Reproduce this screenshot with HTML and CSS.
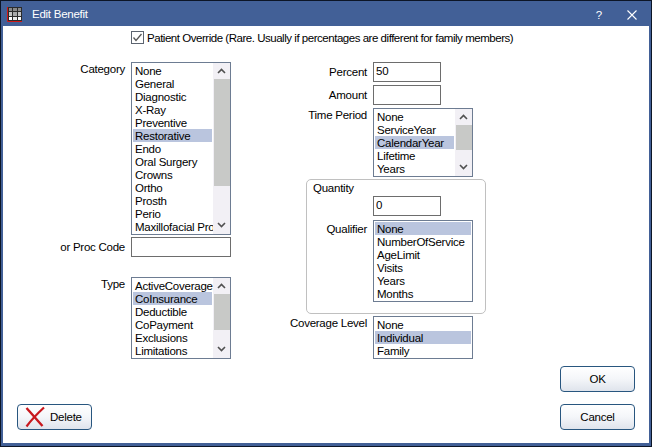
FILE: index.html
```html
<!DOCTYPE html>
<html>
<head>
    <title>Edit Benefit</title>
    <link rel="stylesheet" href="styles.css">
</head>
<body>
    <div class="window">
        <div class="titlebar">
            <svg class="app-icon" width="16" height="16" viewBox="0 0 16 16">
                <rect x="1" y="1" width="14" height="14" fill="#2b2b2b"/>
                <rect x="2" y="2" width="3" height="3" fill="#8a8a8a"/>
                <rect x="6" y="2" width="4" height="3" fill="#8a8a8a"/>
                <rect x="11" y="2" width="3" height="3" fill="#8a8a8a"/>
                <rect x="2" y="6" width="3" height="4" fill="#c4c4c4"/>
                <rect x="6" y="6" width="4" height="4" fill="#a8a8a8"/>
                <rect x="11" y="6" width="3" height="4" fill="#c4c4c4"/>
                <rect x="2" y="11" width="3" height="3" fill="#fff"/>
                <rect x="6" y="11" width="4" height="3" fill="#e8e8e8"/>
                <rect x="11" y="11" width="3" height="3" fill="#fff"/>
                <path d="M0.5 1V15.5H15" fill="none" stroke="#d01818"/>
            </svg>
            <span class="title">Edit Benefit</span>
            <span class="help">?</span>
            <svg class="close" width="10" height="10" viewBox="0 0 10 10">
                <path d="M0.5 0.5L9.5 9.5M9.5 0.5L0.5 9.5" stroke="#fff" stroke-width="1.1"/>
            </svg>
        </div>
        <div class="content">
            <label class="override">
                <svg class="check" width="13" height="13" viewBox="0 0 13 13">
                    <rect x="0.5" y="0.5" width="12" height="12" fill="#fff" stroke="#5c6470"/>
                    <path d="M2.5 6.5L5 9.5L10.5 3" fill="none" stroke="#555" stroke-width="1.3"/>
                </svg>
                <span class="override-text">Patient Override (Rare. Usually if percentages are different for family members)</span>
            </label>

            <div class="columns">
                <div class="col-left">
                    <div class="row">
                        <div class="lbl">Category</div>
                        <div class="list list-wide list-category">
                            <div class="items">
                                <div>None</div>
                                <div>General</div>
                                <div>Diagnostic</div>
                                <div>X-Ray</div>
                                <div>Preventive</div>
                                <div class="sel">Restorative</div>
                                <div>Endo</div>
                                <div>Oral Surgery</div>
                                <div>Crowns</div>
                                <div>Ortho</div>
                                <div>Prosth</div>
                                <div>Perio</div>
                                <div>Maxillofacial Prosth</div>
                            </div>
                            <div class="scroll">
                                <svg class="arrow" viewBox="0 0 9 6"><path d="M1 5L4.5 1.5L8 5" fill="none" stroke="#505050" stroke-width="1.6"/></svg>
                                <div class="track"><div class="thumb thumb-category"></div></div>
                                <svg class="arrow" viewBox="0 0 9 6"><path d="M1 1L4.5 4.5L8 1" fill="none" stroke="#505050" stroke-width="1.6"/></svg>
                            </div>
                        </div>
                    </div>
                    <div class="row row-code">
                        <div class="lbl lbl-mid">or Proc Code</div>
                        <input class="text text-wide" type="text">
                    </div>
                    <div class="row row-type">
                        <div class="lbl">Type</div>
                        <div class="list list-wide list-type">
                            <div class="items">
                                <div>ActiveCoverage</div>
                                <div class="sel">CoInsurance</div>
                                <div>Deductible</div>
                                <div>CoPayment</div>
                                <div>Exclusions</div>
                                <div>Limitations</div>
                            </div>
                            <div class="scroll">
                                <svg class="arrow" viewBox="0 0 9 6"><path d="M1 5L4.5 1.5L8 5" fill="none" stroke="#505050" stroke-width="1.6"/></svg>
                                <div class="track"><div class="thumb thumb-type"></div></div>
                                <svg class="arrow" viewBox="0 0 9 6"><path d="M1 1L4.5 4.5L8 1" fill="none" stroke="#505050" stroke-width="1.6"/></svg>
                            </div>
                        </div>
                    </div>
                </div>

                <div class="col-right">
                    <div class="row">
                        <div class="lbl lbl-mid">Percent</div>
                        <input class="text" type="text" value="50">
                    </div>
                    <div class="row row-amount">
                        <div class="lbl lbl-mid">Amount</div>
                        <input class="text" type="text">
                    </div>
                    <div class="row row-time">
                        <div class="lbl">Time Period</div>
                        <div class="list list-wide list-time">
                            <div class="items">
                                <div>None</div>
                                <div>ServiceYear</div>
                                <div class="sel">CalendarYear</div>
                                <div>Lifetime</div>
                                <div>Years</div>
                            </div>
                            <div class="scroll">
                                <svg class="arrow" viewBox="0 0 9 6"><path d="M1 5L4.5 1.5L8 5" fill="none" stroke="#505050" stroke-width="1.6"/></svg>
                                <div class="track"><div class="thumb thumb-time"></div></div>
                                <svg class="arrow" viewBox="0 0 9 6"><path d="M1 1L4.5 4.5L8 1" fill="none" stroke="#505050" stroke-width="1.6"/></svg>
                            </div>
                        </div>
                    </div>
                    <div class="group">
                        <div class="group-title">Quantity</div>
                        <div class="row row-qty">
                            <div class="lbl"></div>
                            <input class="text" type="text" value="0">
                        </div>
                        <div class="row row-qualifier">
                            <div class="lbl lbl-qualifier">Qualifier</div>
                            <div class="list list-wide list-qualifier">
                                <div class="items">
                                    <div class="sel">None</div>
                                    <div>NumberOfService</div>
                                    <div>AgeLimit</div>
                                    <div>Visits</div>
                                    <div>Years</div>
                                    <div>Months</div>
                                </div>
                            </div>
                        </div>
                    </div>
                    <div class="row row-level">
                        <div class="lbl">Coverage Level</div>
                        <div class="list list-wide list-level">
                            <div class="items">
                                <div>None</div>
                                <div class="sel">Individual</div>
                                <div>Family</div>
                            </div>
                        </div>
                    </div>
                </div>
            </div>

            <div class="footer">
                <button class="btn btn-delete" type="button">
                    <svg width="22" height="22" viewBox="0 0 22 22">
                        <path d="M2.5 2C8 8 13 14 18.5 20" fill="none" stroke="#c8181e" stroke-width="2.4"/>
                        <path d="M20 1.5C14 7 8 13 2.5 20.5" fill="none" stroke="#c8181e" stroke-width="2.2"/>
                    </svg>
                    <span>Delete</span>
                </button>
                <div class="footer-right">
                    <button class="btn" type="button">OK</button>
                    <button class="btn" type="button">Cancel</button>
                </div>
            </div>
        </div>
    </div>
</body>
</html>
```

FILE: styles.css
```css
html, body {
    margin: 0;
    padding: 0;
    width: 652px;
    height: 447px;
    overflow: hidden;
    background-color: #000;
}
body {
    font-family: "Liberation Sans", Arial, sans-serif;
    font-size: 11.5px;
    letter-spacing: -0.25px;
    color: #000;
}
.window {
    box-sizing: border-box;
    width: 652px;
    height: 447px;
    display: flex;
    flex-direction: column;
    background-color: #426097;
    border: 1px solid #0c1526;
}
.titlebar {
    height: 25px;
    display: flex;
    align-items: center;
    color: #fff;
    flex: none;
}
.app-icon {
    margin-left: 6px;
}
.title {
    margin-left: 9px;
    flex: 1;
}
.help {
    margin-right: 25px;
    padding-top: 2px;
}
.close {
    margin-right: 14px;
    margin-top: 3px;
}
.content {
    flex: 1;
    margin: 0 2px 3px 2px;
    background-color: #fff;
    display: flex;
    flex-direction: column;
    min-height: 0;
}
.override {
    display: flex;
    align-items: center;
    gap: 3px;
    margin: 5px 0 0 128px;
    height: 13px;
}
.override-text {
    letter-spacing: -0.47px;
}
.check {
    flex: none;
}
.columns {
    display: flex;
    margin-top: 18px;
}
.col-left {
    width: 300px;
    display: flex;
    flex-direction: column;
    flex: none;
}
.col-right {
    display: flex;
    flex-direction: column;
}
.row {
    display: flex;
    gap: 6px;
}
.lbl {
    display: flex;
    justify-content: flex-end;
    flex: none;
    line-height: 14px;
    white-space: nowrap;
}
.col-left .lbl {
    width: 122px;
}
.col-right .lbl {
    width: 64px;
}
.lbl-mid {
    align-self: center;
}
.row-code {
    margin-top: 2px;
}
.row-type {
    margin-top: 20px;
}
.row-amount {
    margin-top: 3px;
}
.row-time {
    margin-top: 3px;
}
.row-qualifier {
    margin-top: 4px;
}
.row-level {
    margin-top: 2px;
}
.text {
    box-sizing: border-box;
    width: 68px;
    height: 20px;
    border: 1px solid #6d6d6d;
    padding: 0 2px 3px;
    margin: 0;
    font: inherit;
    letter-spacing: inherit;
    color: #000;
    background-color: #fff;
    outline: none;
}
.text-wide {
    width: 100px;
}
.list {
    box-sizing: border-box;
    display: flex;
    border: 1px solid #6d7c92;
    background-color: #fff;
    overflow: hidden;
    flex: none;
}
.list-wide {
    width: 100px;
}
.list-category {
    height: 173px;
}
.list-type {
    height: 82px;
}
.list-time {
    height: 69px;
}
.list-qualifier {
    height: 82px;
}
.list-level {
    height: 43px;
}
.items {
    flex: 1;
    min-width: 0;
    padding: 1px 1px 0;
    white-space: nowrap;
    overflow: hidden;
}
.items div {
    height: 13px;
    line-height: 15px;
    padding-left: 2px;
}
.items .sel {
    background-color: #bac5de;
}
.scroll {
    width: 17px;
    flex: none;
    display: flex;
    flex-direction: column;
    background-color: #f2f0f5;
}
.arrow {
    width: 9px;
    height: 6px;
    margin: 5px 4px 6px;
    flex: none;
}
.track {
    flex: 1;
    min-height: 0;
    margin-top: -1px;
}
.thumb {
    margin-left: 1px;
    background-color: #c8c9c7;
}
.thumb-category {
    height: 107px;
}
.thumb-type {
    height: 36px;
}
.thumb-time {
    height: 25px;
}
.group {
    box-sizing: border-box;
    width: 180px;
    height: 135px;
    margin: 2px 0 0 3px;
    padding-top: 1px;
    border: 1px solid #c0c0c0;
    border-radius: 5px;
    display: flex;
    flex-direction: column;
}
.col-right .group .lbl {
    width: 60px;
}
.col-right .group .lbl-qualifier {
    padding-top: 2px;
}
.group-title {
    margin-left: 6px;
    line-height: 14px;
}
.row-qty {
    margin-top: 1px;
}
.footer {
    flex: 1;
    display: flex;
    justify-content: space-between;
    align-items: flex-end;
    padding: 0 14px 13px 14px;
}
.footer-right {
    display: flex;
    flex-direction: column;
    gap: 12px;
}
.btn {
    box-sizing: border-box;
    width: 75px;
    height: 26px;
    display: flex;
    align-items: center;
    justify-content: center;
    padding: 0;
    border: 1px solid #28567f;
    border-radius: 4px;
    background: linear-gradient(#ffffff, #f4f6f9 50%, #dfe4ec);
    font: inherit;
    letter-spacing: inherit;
    color: #000;
}
.btn-delete {
    justify-content: flex-start;
    gap: 4px;
    padding-left: 6px;
}
```
